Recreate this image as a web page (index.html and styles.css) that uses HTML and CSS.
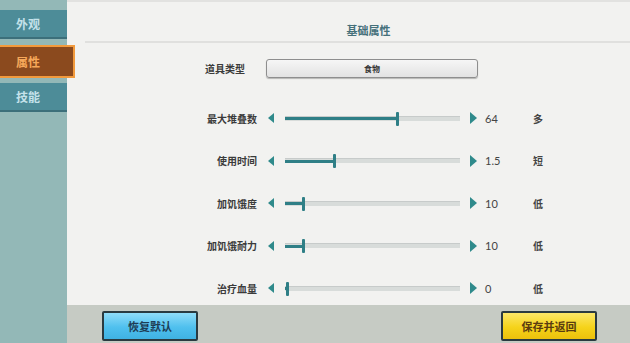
FILE: index.html
```html
<!DOCTYPE html>
<html lang="zh">
<head>
    <meta charset="UTF-8">
    <title>道具编辑</title>
    <link rel="stylesheet" href="styles.css">
</head>
<body>

<div class="screen">
    <div class="sidebar">
        <div class="tab">外观</div>
        <div class="tab active">属性</div>
        <div class="tab">技能</div>
    </div>

    <div class="main">
        <div class="panel">
            <div class="panel-title">基础属性</div>

            <div class="type-row">
                <div class="label">道具类型</div>
                <div class="type-btn">食物</div>
            </div>

            <div class="slider-row">
                <div class="label">最大堆叠数</div>
                <div class="arrow-left"></div>
                <div class="track"><div class="fill" style="width: 111px"></div><div class="thumb"></div></div>
                <div class="arrow-right"></div>
                <div class="value">64</div>
                <div class="hint">多</div>
            </div>
            <div class="slider-row">
                <div class="label">使用时间</div>
                <div class="arrow-left"></div>
                <div class="track"><div class="fill" style="width: 48px"></div><div class="thumb"></div></div>
                <div class="arrow-right"></div>
                <div class="value">1.5</div>
                <div class="hint">短</div>
            </div>
            <div class="slider-row">
                <div class="label">加饥饿度</div>
                <div class="arrow-left"></div>
                <div class="track"><div class="fill" style="width: 17px"></div><div class="thumb"></div></div>
                <div class="arrow-right"></div>
                <div class="value">10</div>
                <div class="hint">低</div>
            </div>
            <div class="slider-row">
                <div class="label">加饥饿耐力</div>
                <div class="arrow-left"></div>
                <div class="track"><div class="fill" style="width: 17px"></div><div class="thumb"></div></div>
                <div class="arrow-right"></div>
                <div class="value">10</div>
                <div class="hint">低</div>
            </div>
            <div class="slider-row">
                <div class="label">治疗血量</div>
                <div class="arrow-left"></div>
                <div class="track"><div class="fill" style="width: 1px"></div><div class="thumb"></div></div>
                <div class="arrow-right"></div>
                <div class="value">0</div>
                <div class="hint">低</div>
            </div>
        </div>

        <div class="footer">
            <div class="btn btn-blue">恢复默认</div>
            <div class="btn btn-yellow">保存并返回</div>
        </div>
    </div>
</div>

</body>
</html>
```

FILE: styles.css
```css
body {
    margin: 0;
    font-family: "Noto Sans CJK SC", "Noto Sans", sans-serif;
    background-color: #f2f2f0;
}

.screen {
    display: flex;
    width: 630px;
    height: 343px;
    overflow: hidden;
}

.sidebar {
    width: 67px;
    flex: 0 0 67px;
    background-color: #93b8b7;
    padding-top: 10px;
    box-sizing: border-box;
    display: flex;
    flex-direction: column;
    gap: 7px;
    position: relative;
    z-index: 2;
}

.tab {
    height: 27px;
    background-color: #4d8c98;
    border-bottom: 2px solid #3c6f7a;
    color: #c4e2ea;
    font-size: 12px;
    font-weight: bold;
    line-height: 27px;
    padding-left: 16px;
}

.tab.active {
    width: 57px;
    height: 29px;
    line-height: 29px;
    background-color: #8b4a1e;
    border: 2px solid #f29a3c;
    border-left: none;
    color: #f6a85a;
    margin-top: -1px;
    margin-bottom: -2px;
}

.main {
    flex: 1;
    display: flex;
    flex-direction: column;
}

.panel {
    flex: 1;
    background-color: #f2f2f0;
    border-top: 2px solid #e2e2e0;
}

.panel-title {
    margin-left: 18px;
    height: 41px;
    padding-top: 18px;
    box-sizing: border-box;
    border-bottom: 2px solid #e0e0de;
    text-align: center;
    text-indent: 22px;
    font-size: 11px;
    font-weight: bold;
    line-height: 20px;
    color: #45707a;
}

.type-row {
    display: flex;
    align-items: center;
    margin-top: 15px;
    height: 20px;
}

.type-row .label {
    width: 178px;
    flex-basis: 178px;
}

.label {
    width: 190px;
    flex: 0 0 190px;
    text-align: right;
    font-size: 10px;
    font-weight: bold;
    color: #3b3b3b;
}

.type-btn {
    margin-left: 21px;
    width: 210px;
    height: 17px;
    border: 1px solid #8e8e8e;
    border-radius: 3px;
    background: linear-gradient(#f6f6f6, #e2e2e2);
    box-shadow: 0 1px 1px rgba(0, 0, 0, 0.25);
    text-align: center;
    font-size: 8px;
    font-weight: bold;
    line-height: 17px;
    color: #333;
}

.slider-row {
    display: flex;
    align-items: center;
    height: 20px;
    margin-top: 22.5px;
}

.type-row + .slider-row {
    margin-top: 30px;
}

.arrow-left {
    margin-left: 11px;
    width: 0;
    height: 0;
    border-top: 5px solid transparent;
    border-bottom: 5px solid transparent;
    border-right: 6px solid #2f8a8b;
}

.track {
    margin-left: 11px;
    width: 175px;
    height: 4px;
    background-color: #d8dcda;
    border-top: 1px solid #c7cbca;
    display: flex;
    align-items: center;
}

.fill {
    height: 3px;
    background-color: #2f7f86;
}

.thumb {
    width: 3px;
    height: 14px;
    background-color: #2f7f86;
    border-radius: 1px;
}

.arrow-right {
    margin-left: 10px;
    width: 0;
    height: 0;
    border-top: 6px solid transparent;
    border-bottom: 6px solid transparent;
    border-left: 7px solid #2f8a8b;
}

.value {
    margin-left: 8px;
    width: 48px;
    font-family: "Lato", "Noto Sans", sans-serif;
    font-size: 11px;
    color: #444;
}

.hint {
    font-size: 10px;
    font-weight: bold;
    color: #444;
}

.footer {
    height: 38px;
    flex: 0 0 38px;
    background-color: #c6cbc4;
    display: flex;
    align-items: center;
    justify-content: space-between;
    padding: 0 33px 0 35px;
}

.btn {
    width: 92px;
    height: 26px;
    border: 2px solid #2a3a40;
    border-radius: 2px;
    text-align: center;
    font-size: 11px;
    font-weight: bold;
    line-height: 26px;
    margin-top: 4px;
}

.btn-blue {
    background: linear-gradient(#8fdcf8, #4fc0ee 55%, #3fb2e2);
    color: #1e3d55;
}

.btn-yellow {
    background: linear-gradient(#fbe768, #f5d31a 55%, #ecc10c);
    color: #5a3c10;
}
```
